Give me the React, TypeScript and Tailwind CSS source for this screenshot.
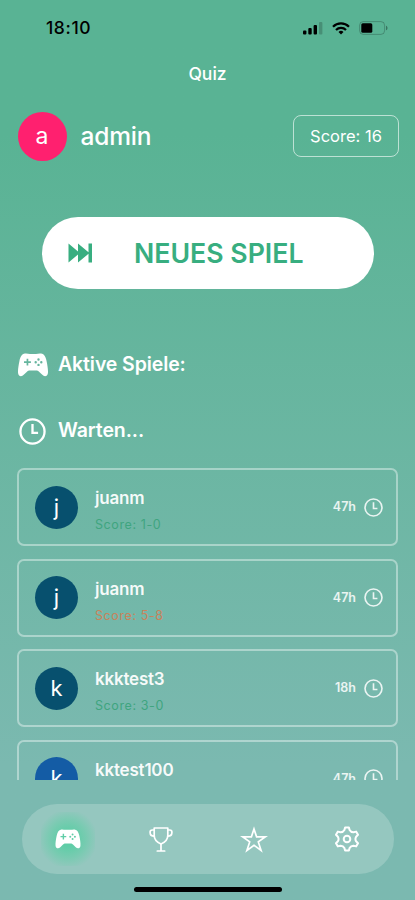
import { clsx } from 'clsx';

type Game = {
    id: number;
    name: string;
    score?: string;
    hours: string;
    lost?: boolean;
    avatar: string;
};

const GAMES: Game[] = [
    { id: 1, name: 'juanm', score: '1-0', hours: '47h', avatar: 'bg-[#07506e]' },
    { id: 2, name: 'juanm', score: '5-8', hours: '47h', lost: true, avatar: 'bg-[#07506e]' },
    { id: 3, name: 'kkktest3', score: '3-0', hours: '18h', avatar: 'bg-[#07506e]' },
    { id: 4, name: 'kktest100', hours: '47h', avatar: 'bg-[#145ca5]' },
];

function GamepadIcon({ className }: { className?: string }) {
    return (
        <svg viewBox="0 0 30 24" className={className} fill="currentColor">
            <path
                fillRule="evenodd"
                d="M7 .6C9 .3 10.400 1 12 1h6c1.600 0 3-.7 5-.4 3.400.6 4.700 3.400 5.600 7.600.9 4.200 1.700 9.600 1.300 12.100-.4 3.200-3.700 3.700-5.600 1.500L21.300 19c-1-1.200-2-1.600-3.500-1.600h-5.600c-1.500 0-2.500.4-3.500 1.600l-3 2.800C3.800 24 .5 23.500.1 20.300-.3 17.800.500 12.400 1.400 8.200 2.300 4 3.600 1.200 7 .6ZM8.600 5.700v2.600H6v1.700h2.600v2.600h1.700V10h2.600V8.300h-2.600V5.700Z
                M20.500 5.300a1.200 1.200 0 1 0 0 2.400 1.200 1.200 0 1 0 0-2.400ZM17.700 8a1.200 1.200 0 1 0 0 2.400 1.200 1.200 0 1 0 0-2.400ZM23.300 8a1.200 1.200 0 1 0 0 2.400 1.200 1.200 0 1 0 0-2.400ZM20.500 10.700a1.200 1.200 0 1 0 0 2.400 1.200 1.200 0 1 0 0-2.400Z"
            />
        </svg>
    );
}

function ClockIcon({ className }: { className?: string }) {
    return (
        <svg viewBox="0 0 28 28" className={className} fill="none" stroke="currentColor" strokeWidth="2.400">
            <circle cx="14" cy="14" r="12.500" />
            <path d="M14 6.200v9.200h5.800" />
        </svg>
    );
}

function TrophyIcon() {
    return (
        <svg viewBox="0 0 24 25" className="h-[25px] w-6" fill="none" stroke="currentColor" strokeWidth="1.700" strokeLinejoin="round" strokeLinecap="round">
            <path d="M5.200 1h13.600v7.500c0 4.300-3.200 7-6.800 8.500-3.600-1.500-6.800-4.200-6.800-8.500Z" />
            <path d="M5 3H3.200C1.800 3 1 4 1.100 5.300l.3 2C1.700 8.600 2.800 9 5 9.200M19 3h1.800c1.400 0 2.200 1 2.100 2.300l-.3 2c-.3 1.300-1.400 1.700-3.600 1.900M12 17v6.500M8.300 24h7.400" />
        </svg>
    );
}

function StarIcon() {
    return (
        <svg viewBox="0 0 28 27" className="h-[27px] w-7" fill="none" stroke="currentColor" strokeWidth="1.700">
            <path d="m14 3 2.600 7.800h8.800l-7.100 5.100 2.800 8.500-7.100-5.200-7.100 5.200 2.800-8.500-7.100-5.100h8.800Z" />
        </svg>
    );
}

function GearIcon() {
    return (
        <svg viewBox="-12 -13 24 26" className="h-[26px] w-6" fill="none" stroke="currentColor" strokeWidth="2" strokeLinejoin="round">
            <path
                d="M-1.900-11.600H1.900L2.600-9Q3.900-6.700 6.500-6.800L9.100-7.400 11-4.200 9.100-2.300Q7.800 0 9.100 2.300L11 4.200 9.100 7.400 6.500 6.800Q3.900 6.700 2.600 9L1.900 11.600H-1.900L-2.600 9Q-3.900 6.700-6.500 6.800L-9.100 7.400-11 4.200-9.100 2.300Q-7.800 0-9.100-2.300L-11-4.200-9.100-7.400-6.500-6.800Q-3.900-6.700-2.600-9Z"
            />
            <circle r="3.300" />
        </svg>
    );
}

function StatusBar() {
    return (
        <div className="flex h-14 items-center justify-between pr-[27px] pl-[46px] text-black">
            <span className="text-[17.500px] font-medium tracking-[0.6px]">18:10</span>
            <div className="flex items-center gap-[9px]">
                <svg viewBox="0 0 20 13" className="h-[13px] w-5" fill="currentColor">
                    <rect y="8.500" width="3.400" height="4" rx="1" />
                    <rect x="5.300" y="6" width="3.400" height="6.500" rx="1" />
                    <rect x="10.600" y="3" width="3.400" height="9.500" rx="1" />
                    <rect x="16" y="0" width="3.400" height="12.500" rx="1" opacity=".2" />
                </svg>
                <svg viewBox="0 0 18 13" className="h-[13px] w-[18px]" fill="none" stroke="currentColor" strokeWidth="2.200">
                    <path d="M1 4.700a11.300 11.300 0 0 1 16 0M4 8a7 7 0 0 1 10 0" />
                    <path d="m9 12.500-2.500-2.600a3.600 3.600 0 0 1 5 0Z" fill="currentColor" stroke="none" />
                </svg>
                <svg viewBox="0 0 29 14" className="h-[14px] w-[29px]">
                    <rect x=".6" y=".6" width="25" height="12.800" rx="3.700" fill="none" stroke="#000" strokeOpacity=".22" />
                    <rect x="2.300" y="2.300" width="11" height="9.400" rx="1.500" fill="#000" />
                    <path d="M27 4.700c2 .7 2 3.900 0 4.600Z" fill="#000" opacity=".35" />
                </svg>
            </div>
        </div>
    );
}

function GameCard({ game }: { game: Game }) {
    return (
        <div className="flex h-[78px] shrink-0 items-center rounded-[7px] border-2 border-white/40 pr-[13px] pl-4">
            <div className={clsx('flex size-[43px] items-center justify-center rounded-full text-[22px] text-white', game.avatar)}>
                {game.name[0]}
            </div>
            <div className="ml-[17px] h-[50px] flex-1 pt-1">
                <div className="text-[17px] leading-6 font-semibold tracking-[-0.2px] text-white/95">{game.name}</div>
                {game.score && (
                    <div className={clsx('mt-[5px] text-[12.500px] leading-5 tracking-[0.6px]', game.lost ? 'text-[#c9835c]' : 'text-[#3fa580]')}>
                        Score: {game.score}
                    </div>
                )}
            </div>
            <span className="mr-2 pt-px text-[12.500px] font-semibold text-white/85">{game.hours}</span>
            <ClockIcon className="size-[19px] text-white/85" />
        </div>
    );
}

export default function App() {
    return (
        <div className="flex h-[900px] w-[415px] flex-col overflow-hidden bg-linear-to-b from-[#59b394] from-15% to-[#7bb9b0] to-85% font-['Inter',sans-serif] text-white">
            <StatusBar />
            <header className="flex h-9 items-center justify-center text-[17.500px] font-medium">Quiz</header>

            <section className="mt-[19px] flex h-[50px] items-center pr-4 pl-[17.500px]">
                <div className="flex size-[49px] items-center justify-center rounded-full bg-[#ff206f] text-[23px]">a</div>
                <span className="ml-[14px] flex-1 pt-px text-[24.500px] font-medium tracking-[-0.2px]">admin</span>
                <div className="flex h-[42px] w-[106px] items-center justify-center rounded-lg border-[1.500px] border-white/60 text-[16.500px]">Score: 16</div>
            </section>

            <button className="mt-14 ml-[42px] flex h-[72px] w-[332px] shrink-0 items-center rounded-full bg-white pl-[26px] text-[#38ae80]">
                <svg viewBox="0 0 25 20" className="h-5 w-[25px]" fill="currentColor">
                    <path d="m.5.500 9.500 8V.5l10.500 8.700V.5H24v19h-3.500v-8.700L10 19.500v-8l-9.500 8Z" />
                </svg>
                <span className="ml-[41px] pt-px text-[26.700px] font-semibold whitespace-nowrap">NEUES SPIEL</span>
            </button>

            <h2 className="mt-[60px] flex h-8 items-center pl-[18px] text-[19.500px] font-semibold tracking-[-0.1px]">
                <GamepadIcon className="mr-[10px] h-6 w-[30px]" />
                Aktive Spiele:
            </h2>
            <h2 className="mt-[34px] flex h-8 items-center pl-[19px] text-[19.500px] font-semibold tracking-[-0.1px]">
                <ClockIcon className="mr-3 size-[27px]" />
                Warten...
            </h2>

            <div className="mt-[21px] flex h-[312px] shrink-0 flex-col gap-[12.500px] overflow-hidden pr-[17px] pl-[17px]">
                {GAMES.map((game) => (
                    <GameCard key={game.id} game={game} />
                ))}
            </div>

            <nav className="mx-auto mt-6 grid h-[70px] w-[372px] shrink-0 grid-cols-4 place-items-center rounded-full bg-white/20">
                <button className="flex size-[54px] items-center justify-center rounded-2xl bg-[radial-gradient(circle,#60cda7_20%,#78cbb1_48%,#95c7bd00_78%)]">
                    <GamepadIcon className="h-5 w-[26px]" />
                </button>
                <TrophyIcon />
                <StarIcon />
                <GearIcon />
            </nav>
            {/* Home indicator */}
            <div className="mx-auto mt-[13px] h-[5px] w-[148px] shrink-0 rounded-full bg-black" />
        </div>
    );
}
